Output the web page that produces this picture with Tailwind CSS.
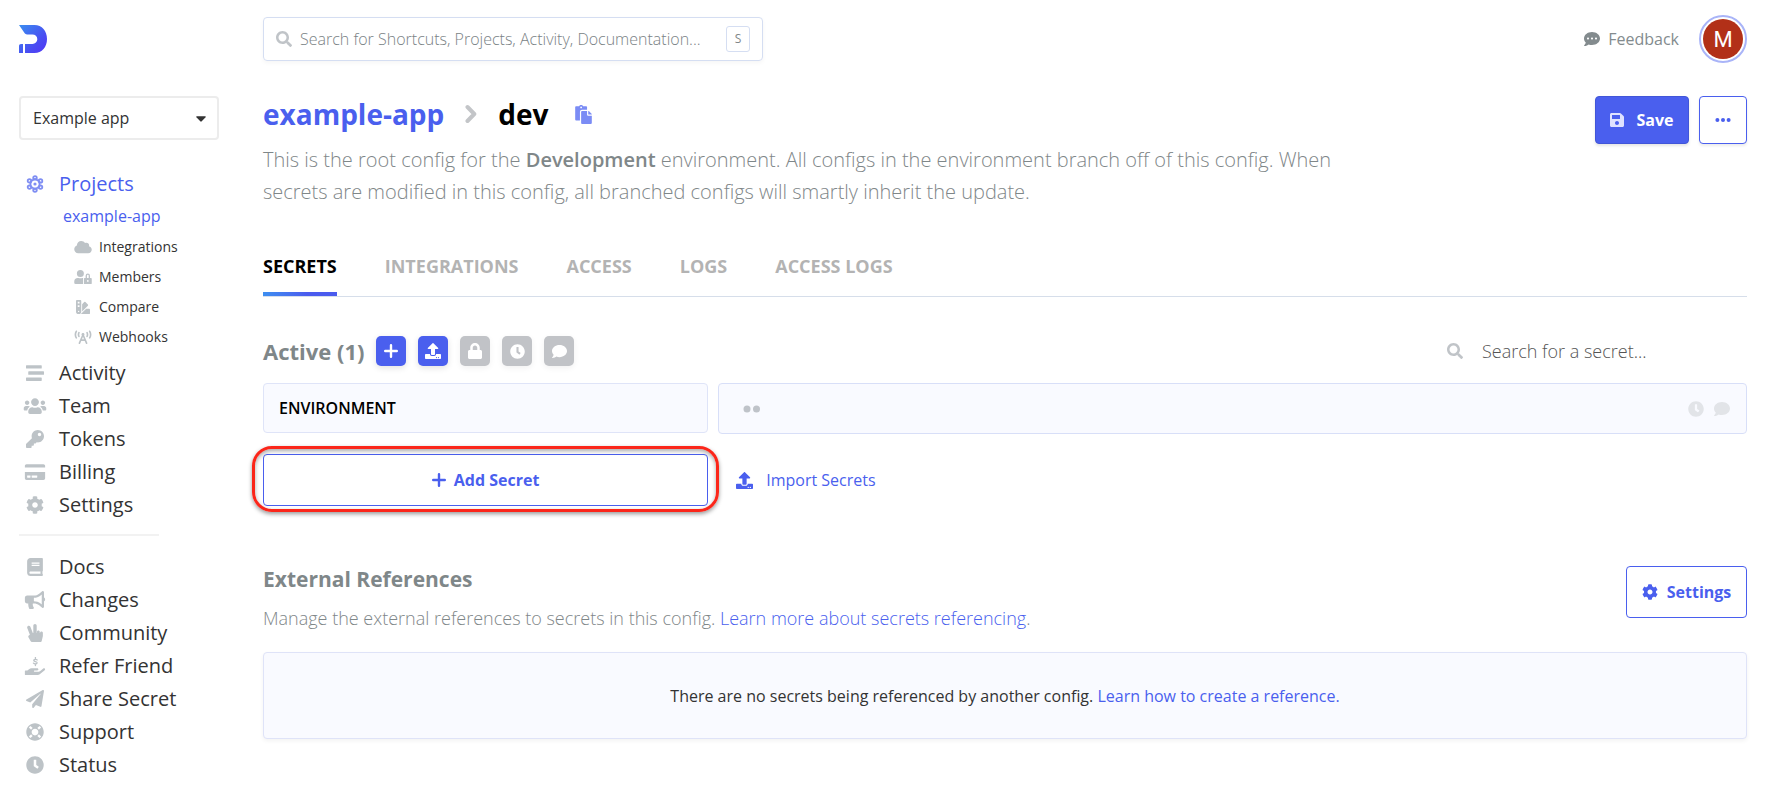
<!DOCTYPE html>
<html lang="en">
<head>
<meta charset="utf-8">
<meta name="viewport" content="width=device-width, initial-scale=1">
<title>example-app / dev</title>
<script src="https://cdn.jsdelivr.net/npm/@tailwindcss/browser@4"></script>
</head>
<body class="bg-white font-['Open_Sans','Noto_Sans',sans-serif] text-base text-[#333] antialiased">
<svg class="hidden" aria-hidden="true">
  <symbol id="search" viewBox="0 0 512 512"><path d="M505 442.7L405.3 343c-4.5-4.5-10.6-7-17-7H372c27.6-35.3 44-79.7 44-128C416 93.1 322.9 0 208 0S0 93.1 0 208s93.1 208 208 208c48.3 0 92.7-16.4 128-44v16.3c0 6.4 2.5 12.5 7 17l99.7 99.7c9.4 9.4 24.6 9.4 33.9 0l28.3-28.3c9.4-9.4 9.4-24.6.1-34zM208 336c-70.7 0-128-57.2-128-128 0-70.7 57.2-128 128-128 70.7 0 128 57.2 128 128 0 70.7-57.2 128-128 128z"/></symbol>
  <symbol id="comment-dots" viewBox="0 0 512 512"><path d="M256 32C114.6 32 0 125.1 0 240c0 49.6 21.4 95 57 130.7C44.500 421.1 2.7 466 2.2 466.500c-2.2 2.3-2.800 5.7-1.500 8.7S4.800 480 8 480c66.300 0 116-31.800 140.600-51.400 32.700 12.300 69 19.400 107.400 19.400 141.400 0 256-93.100 256-208S397.400 32 256 32zM128 272c-17.700 0-32-14.300-32-32s14.300-32 32-32 32 14.300 32 32-14.300 32-32 32zm128 0c-17.700 0-32-14.300-32-32s14.300-32 32-32 32 14.300 32 32-14.300 32-32 32zm128 0c-17.700 0-32-14.300-32-32s14.300-32 32-32 32 14.300 32 32-14.300 32-32 32z"/></symbol>
  <symbol id="comment" viewBox="0 0 512 512"><path d="M256 32C114.600 32 0 125.100 0 240c0 49.600 21.400 95 57 130.700C44.500 421.100 2.700 466 2.200 466.500c-2.200 2.300-2.800 5.700-1.500 8.700S4.800 480 8 480c66.300 0 116-31.800 140.600-51.400 32.700 12.300 69 19.400 107.400 19.400 141.400 0 256-93.100 256-208S397.400 32 256 32z"/></symbol>
  <symbol id="cog" viewBox="0 0 512 512"><path d="M487.400 315.700l-42.600-24.600c4.300-23.200 4.300-47 0-70.200l42.600-24.600c4.900-2.800 7.100-8.600 5.500-14-11.100-35.600-30-67.800-54.700-94.600-3.800-4.100-10-5.100-14.800-2.300L380.800 110c-17.900-15.400-38.500-27.300-60.800-35.100V25.800c0-5.600-3.900-10.500-9.400-11.700-36.700-8.200-74.300-7.800-109.200 0-5.500 1.200-9.400 6.100-9.400 11.700V75c-22.200 7.900-42.800 19.800-60.800 35.100L88.700 85.500c-4.900-2.800-11-1.900-14.800 2.300-24.700 26.700-43.600 58.900-54.700 94.600-1.700 5.400.6 11.200 5.500 14L67.300 221c-4.300 23.200-4.300 47 0 70.200l-42.600 24.600c-4.900 2.800-7.100 8.600-5.500 14 11.100 35.600 30 67.800 54.700 94.600 3.800 4.100 10 5.100 14.800 2.300l42.600-24.600c17.900 15.400 38.500 27.300 60.800 35.100v49.200c0 5.600 3.900 10.500 9.400 11.700 36.700 8.200 74.300 7.800 109.200 0 5.500-1.200 9.400-6.100 9.400-11.700v-49.200c22.200-7.900 42.800-19.800 60.800-35.100l42.600 24.600c4.900 2.800 11 1.900 14.800-2.300 24.700-26.700 43.600-58.900 54.700-94.600 1.500-5.500-.7-11.300-5.600-14.100zM256 336c-44.100 0-80-35.900-80-80s35.900-80 80-80 80 35.900 80 80-35.900 80-80 80z"/></symbol>
  <symbol id="clock" viewBox="0 0 512 512"><path d="M256 8C119 8 8 119 8 256s111 248 248 248 248-111 248-248S393 8 256 8zm57.100 350.100L224.900 294c-3.100-2.300-4.900-5.900-4.900-9.700V116c0-6.600 5.400-12 12-12h48c6.600 0 12 5.400 12 12v137.700l63.500 46.200c5.400 3.900 6.500 11.400 2.600 16.800l-28.200 38.800c-3.900 5.300-11.400 6.500-16.800 2.600z"/></symbol>
  <symbol id="upload" viewBox="0 0 512 512"><path d="M296 384h-80c-13.300 0-24-10.700-24-24V192h-87.700c-17.800 0-26.700-21.500-14.100-34.100L242.300 5.700c7.500-7.500 19.800-7.500 27.300 0l152.200 152.200c12.600 12.600 3.700 34.100-14.100 34.100H320v168c0 13.300-10.700 24-24 24zm216-8v112c0 13.300-10.700 24-24 24H24c-13.300 0-24-10.700-24-24V376c0-13.300 10.700-24 24-24h136v8c0 30.900 25.100 56 56 56h80c30.900 0 56-25.100 56-56v-8h136c13.300 0 24 10.700 24 24zm-124 88c0-11-9-20-20-20s-20 9-20 20 9 20 20 20 20-9 20-20zm64 0c0-11-9-20-20-20s-20 9-20 20 9 20 20 20 20-9 20-20z"/></symbol>
  <symbol id="lock" viewBox="0 0 448 512"><path d="M400 224h-24v-72C376 68.200 307.800 0 224 0S72 68.200 72 152v72H48c-26.500 0-48 21.500-48 48v192c0 26.500 21.500 48 48 48h352c26.500 0 48-21.500 48-48V272c0-26.500-21.500-48-48-48zm-104 0H152v-72c0-39.700 32.300-72 72-72s72 32.300 72 72v72z"/></symbol>
  <symbol id="plus" viewBox="0 0 14 14"><path d="M7 1.200v11.600M1.200 7h11.600" fill="none" stroke="currentColor" stroke-width="2.400" stroke-linecap="round"/></symbol>
  <symbol id="key" viewBox="0 0 512 512"><path d="M512 176.001C512 273.203 433.202 352 336 352c-11.220 0-22.190-1.062-32.827-3.069l-24.012 27.014A23.999 23.999 0 0 1 261.223 384H224v40c0 13.255-10.745 24-24 24h-40v40c0 13.255-10.745 24-24 24H24c-13.255 0-24-10.745-24-24v-78.059c0-6.365 2.529-12.470 7.029-16.971l161.802-161.802C163.108 213.814 160 195.271 160 176 160 78.798 238.797.001 335.999 0 433.488-.001 512 78.511 512 176.001zM336 128c0 26.510 21.490 48 48 48s48-21.490 48-48-21.490-48-48-48-48 21.490-48 48z"/></symbol>
  <symbol id="card" viewBox="0 0 576 512"><path d="M0 432c0 26.500 21.500 48 48 48h480c26.500 0 48-21.500 48-48V256H0v176zm192-68c0-6.600 5.400-12 12-12h136c6.600 0 12 5.400 12 12v40c0 6.600-5.400 12-12 12H204c-6.600 0-12-5.400-12-12v-40zm-128 0c0-6.600 5.400-12 12-12h72c6.600 0 12 5.400 12 12v40c0 6.600-5.400 12-12 12H76c-6.600 0-12-5.400-12-12v-40zM576 80v48H0V80c0-26.500 21.500-48 48-48h480c26.500 0 48 21.500 48 48z"/></symbol>
  <symbol id="plane" viewBox="0 0 512 512"><path d="M476 3.200L12.500 270.600c-18.100 10.400-15.800 35.600 2.200 43.200L121 358.400l287.300-253.200c5.500-4.900 13.300 2.600 8.600 8.300L176 407v80.500c0 23.600 28.500 32.900 42.500 15.800L282 426l124.600 52.200c14.200 6 30.400-2.900 33-18.200l72-432C515 7.800 493.300-6.800 476 3.200z"/></symbol>
  <symbol id="book" viewBox="0 0 448 512"><path d="M448 360V24c0-13.300-10.700-24-24-24H96C43 0 0 43 0 96v320c0 53 43 96 96 96h328c13.300 0 24-10.700 24-24v-16c0-7.500-3.500-14.300-8.900-18.700-4.200-15.400-4.200-59.300 0-74.700 5.400-4.300 8.900-11.100 8.900-18.600zM128 134c0-3.300 2.700-6 6-6h212c3.300 0 6 2.700 6 6v20c0 3.300-2.700 6-6 6H134c-3.300 0-6-2.700-6-6v-20zm0 64c0-3.300 2.700-6 6-6h212c3.300 0 6 2.700 6 6v20c0 3.300-2.700 6-6 6H134c-3.300 0-6-2.700-6-6v-20zm253.400 250H96c-17.700 0-32-14.300-32-32 0-17.600 14.400-32 32-32h285.400c-1.900 17.100-1.900 46.900 0 64z"/></symbol>
  <symbol id="bullhorn" viewBox="0 0 576 512"><path d="M576 240c0-23.630-12.950-44.040-32-55.120V32.010C544 23.260 537.020 0 512 0c-7.120 0-14.190 2.380-19.980 7.020l-85.030 68.030C364.280 109.190 310.660 128 256 128H64c-35.350 0-64 28.650-64 64v96c0 35.350 28.650 64 64 64h33.700c-1.390 10.480-2.180 21.140-2.180 32 0 39.770 9.260 77.350 25.560 110.940 5.190 10.690 16.520 17.060 28.400 17.060h74.280c26.050 0 41.690-29.840 25.900-50.560-16.400-21.520-26.150-48.360-26.150-77.440 0-11.110 1.620-21.790 4.410-32H256c54.660 0 108.280 18.810 150.980 52.950l85.030 68.030a32.023 32.023 0 0 0 19.980 7.020c24.920 0 32-22.780 32-32V295.130C563.050 284.040 576 263.630 576 240zm-96 141.420l-33.050-26.440C392.950 311.780 325.120 288 256 288v-96c69.120 0 136.950-23.780 190.950-66.980L480 98.580v282.840z"/></symbol>
  <symbol id="peace" viewBox="0 0 448 512"><path d="M408 216c-22.092 0-40 17.909-40 40h-8v-32c0-22.091-17.908-40-40-40s-40 17.909-40 40v32h-8V48c0-26.510-21.490-48-48-48s-48 21.490-48 48v208h-13.572L92.688 78.449C82.994 53.774 55.134 41.630 30.461 51.324 5.787 61.017-6.356 88.877 3.337 113.551l74.765 190.342-31.090 24.872c-15.381 12.306-19.515 33.978-9.741 51.081l64 112A39.998 39.998 0 0 0 136 512h240c18.562 0 34.686-12.770 38.937-30.838l32-136A39.973 39.973 0 0 0 448 336v-80c0-22.091-17.908-40-40-40z"/></symbol>
  <symbol id="ring" viewBox="0 0 512 512"><path d="M256 8C119.033 8 8 119.033 8 256s111.033 248 248 248 248-111.033 248-248S392.967 8 256 8zm173.696 119.559l-63.399 63.399c-10.987-18.559-26.670-34.252-45.255-45.255l63.399-63.399a218.396 218.396 0 0 1 45.255 45.255zM256 352c-53.019 0-96-42.981-96-96s42.981-96 96-96 96 42.981 96 96-42.981 96-96 96zM127.559 82.304l63.399 63.399c-18.559 10.987-34.252 26.670-45.255 45.255l-63.399-63.399a218.372 218.372 0 0 1 45.255-45.255zM82.304 384.441l63.399-63.399c10.987 18.559 26.670 34.252 45.255 45.255l-63.399 63.399a218.396 218.396 0 0 1-45.255-45.255zm302.137 45.255l-63.399-63.399c18.559-10.987 34.252-26.670 45.255-45.255l63.399 63.399a218.403 218.403 0 0 1-45.255 45.255z"/></symbol>
  <symbol id="refer" viewBox="0 0 576 512"><path d="M565.300 328.100c-11.800-10.700-30.200-10-42.600 0L430.300 402c-11.300 9.100-25.400 14-40 14H272c-8.800 0-16-7.200-16-16s7.200-16 16-16h78.300c15.900 0 30.700-10.900 33.300-26.600 3.300-20-12.100-37.400-31.600-37.400H192c-27 0-53.100 9.300-74.100 26.300L71.400 384H16c-8.800 0-16 7.200-16 16v96c0 8.800 7.200 16 16 16h356.800c14.500 0 28.600-4.900 40-14L564 377c15.200-12.100 16.400-35.300 1.300-48.900z"/><path d="M348 84c-16-22-84-28-94 8-10 44 98 30 92 76-6 38-82 32-102 6M300 14v36m0 154v38" fill="none" stroke="currentColor" stroke-width="38" stroke-linecap="round"/></symbol>
  <symbol id="users" viewBox="0 0 640 512"><path d="M96 224c35.300 0 64-28.700 64-64s-28.700-64-64-64-64 28.700-64 64 28.700 64 64 64zm448 0c35.300 0 64-28.700 64-64s-28.700-64-64-64-64 28.700-64 64 28.700 64 64 64zm32 32h-64c-17.600 0-33.500 7.100-45.100 18.600 40.300 22.100 68.900 62 75.100 109.400h66c17.700 0 32-14.300 32-32v-32c0-35.300-28.700-64-64-64zm-256 0c61.900 0 112-50.100 112-112S381.900 32 320 32 208 82.100 208 144s50.100 112 112 112zm76.800 32h-8.300c-20.800 10-43.900 16-68.500 16s-47.600-6-68.500-16h-8.300C179.600 288 128 339.600 128 403.200V432c0 26.500 21.500 48 48 48h288c26.500 0 48-21.500 48-48v-28.800c0-63.600-51.600-115.200-115.200-115.200zm-223.700-13.400C161.500 263.100 145.600 256 128 256H64c-35.300 0-64 28.700-64 64v32c0 17.700 14.300 32 32 32h65.900c6.300-47.400 34.900-87.300 75.200-109.400z"/></symbol>
  <symbol id="cloud" viewBox="0 0 640 512"><path d="M537.600 226.600c4.100-10.700 6.400-22.400 6.400-34.600 0-53-43-96-96-96-19.700 0-38.100 6-53.300 16.200C367 64.200 315.300 32 256 32c-88.400 0-160 71.600-160 160 0 2.700.1 5.400.2 8.100C40.200 219.800 0 273.200 0 336c0 79.500 64.500 144 144 144h368c70.700 0 128-57.300 128-128 0-61.900-44-113.600-102.400-125.400z"/></symbol>
  <symbol id="user-lock" viewBox="0 0 640 512"><path d="M224 256A128 128 0 1 0 96 128a128 128 0 0 0 128 128zm96 64a63.080 63.080 0 0 1 8.100-30.500c-4.800-.5-9.500-1.500-14.500-1.500h-16.700a174.080 174.080 0 0 1-145.800 0h-16.700A134.430 134.430 0 0 0 0 422.400V464a48 48 0 0 0 48 48h280.900a63.540 63.540 0 0 1-8.900-32zm288-32h-32v-80a80 80 0 0 0-160 0v80h-32a32 32 0 0 0-32 32v160a32 32 0 0 0 32 32h224a32 32 0 0 0 32-32V320a32 32 0 0 0-32-32zM496 432a32 32 0 1 1 32-32 32 32 0 0 1-32 32zm32-144h-64v-80a32 32 0 0 1 64 0z"/></symbol>
  <symbol id="swatch" viewBox="0 0 512 512"><path d="M434.660 167.710L344.500 77.360a31.830 31.830 0 0 0-45-.07l-.07.07L224 152.880V424L434.660 212.900a32 32 0 0 0 0-45.190zM480 320H373.090L186.680 506.510c-2.060 2.070-4.500 3.580-6.680 5.490H480a32 32 0 0 0 32-32V352a32 32 0 0 0-32-32zM192 32a32 32 0 0 0-32-32H32A32 32 0 0 0 0 32v384a96 96 0 0 0 192 0zM96 440a24 24 0 1 1 24-24 24 24 0 0 1-24 24zm32-184H64v-64h64zm0-128H64V64h64z"/></symbol>
  <symbol id="tower" viewBox="0 0 640 512"><g fill="none" stroke="currentColor" stroke-width="60" stroke-linecap="round"><path d="M190 480L320 175l130 305M245 370h150"/><path d="M75 48c-46 84-46 160 0 240M565 48c46 84 46 160 0 240M172 98c-22 46-22 96 0 140M468 98c22 46 22 96 0 140"/></g><circle cx="320" cy="165" r="52"/></symbol>
  <symbol id="stream" viewBox="0 0 512 512"><path d="M16 128h416c8.840 0 16-7.160 16-16V48c0-8.840-7.160-16-16-16H16C7.160 32 0 39.160 0 48v64c0 8.840 7.160 16 16 16zm480 80H80c-8.840 0-16 7.160-16 16v64c0 8.840 7.160 16 16 16h416c8.840 0 16-7.160 16-16v-64c0-8.840-7.160-16-16-16zm-64 176H16c-8.840 0-16 7.160-16 16v64c0 8.840 7.160 16 16 16h416c8.840 0 16-7.160 16-16v-64c0-8.840-7.160-16-16-16z"/></symbol>
  <symbol id="save" viewBox="0 0 448 512"><path d="M433.941 129.941l-83.882-83.882A48 48 0 0 0 316.118 32H48C21.490 32 0 53.490 0 80v352c0 26.510 21.490 48 48 48h352c26.510 0 48-21.490 48-48V163.882a48 48 0 0 0-14.059-33.941zM224 416c-35.346 0-64-28.654-64-64 0-35.346 28.654-64 64-64s64 28.654 64 64c0 35.346-28.654 64-64 64zm96-304.520V212c0 6.627-5.373 12-12 12H76c-6.627 0-12-5.373-12-12V108c0-6.627 5.373-12 12-12h228.520c3.183 0 6.235 1.264 8.485 3.515l3.480 3.480A11.996 11.996 0 0 1 320 111.480z"/></symbol>
  <symbol id="paste" viewBox="0 0 448 512"><path d="M128 184c0-30.879 25.122-56 56-56h136V56c0-13.255-10.745-24-24-24h-80.610C204.306 12.890 183.637 0 160 0s-44.306 12.890-55.390 32H24C10.745 32 0 42.745 0 56v336c0 13.255 10.745 24 24 24h104V184zm32-144c13.255 0 24 10.745 24 24s-10.745 24-24 24-24-10.745-24-24 10.745-24 24-24zm184 248h104v200c0 13.255-10.745 24-24 24H184c-13.255 0-24-10.745-24-24V184c0-13.255 10.745-24 24-24h136v104c0 13.200 10.800 24 24 24zm104-38.059V256h-96v-96h6.059a24 24 0 0 1 16.970 7.029l65.941 65.941a24.002 24.002 0 0 1 7.030 16.971z"/></symbol>
  <symbol id="atom" viewBox="0 0 18 18"><g fill="none" stroke="currentColor" stroke-width="1.800"><path d="M9 3.800l4.500 2.600v5.200L9 14.200l-4.500-2.600V6.400z"/><circle cx="9" cy="2.900" r="1.800"/><circle cx="14.500" cy="5.900" r="1.800"/><circle cx="14.500" cy="12.100" r="1.800"/><circle cx="9" cy="15.100" r="1.800"/><circle cx="3.500" cy="12.100" r="1.800"/><circle cx="3.500" cy="5.900" r="1.800"/></g><circle cx="9" cy="9" r="1.600" fill="currentColor"/></symbol>
</svg>

<div class="flex min-h-screen">
  <aside class="w-[263px] shrink-0 pl-[19px]">
    <a href="#" aria-label="Home" class="flex h-[78px] items-center">
      <svg class="size-7" viewBox="0 0 28 28"><defs><linearGradient id="brand" x1="0" y1="0" x2="1" y2="1"><stop offset="0" stop-color="#3a8ef0"/><stop offset=".65" stop-color="#4a4cf2"/><stop offset="1" stop-color="#5236f5"/></linearGradient></defs><path fill="url(#brand)" d="M0 0h15.500C23 0 28 6 28 14s-5 14-12.500 14H6v-9h7.500a4.800 4.800 0 0 0 0-9.600H8c-1 0-1.700-.3-2.300-1.100zM2 19h2v9H0v-7c0-1.200.8-2 2-2z"/></svg>
    </a>
    <div class="relative mt-[18px] w-[200px]">
      <select aria-label="Workplace" class="h-11 w-full appearance-none rounded-[4px] border-2 border-[#ececec] bg-white pr-8 pl-3 text-base">
        <option>Example app</option>
      </select>
      <svg class="pointer-events-none absolute top-5 right-[13px] h-[6px] w-[10px]" viewBox="0 0 11 6"><path fill="#333" d="M1 0h9c.8 0 1.100.7.6 1.200L6.300 5.600c-.5.5-1.100.5-1.600 0L.4 1.200C-.1.700.2 0 1 0z"/></svg>
    </div>

    <nav class="mt-[27px] text-xl" aria-label="Main">
      <a href="#" class="flex h-[33px] items-center gap-2 text-[#4a5fee]"><svg class="h-[18px] w-8 opacity-70"><use href="#atom"/></svg>Projects</a>
      <a href="#" class="ml-[44px] flex h-8 items-center text-base text-[#4a5fee]">example-app</a>
      <div class="ml-[55px] text-sm">
        <a href="#" class="flex h-[30px] items-center gap-[7px]"><svg class="h-[14px] w-[18px] fill-[#bdc3c7] text-[#bdc3c7]"><use href="#cloud"/></svg>Integrations</a>
        <a href="#" class="flex h-[30px] items-center gap-[7px]"><svg class="h-[14px] w-[18px] fill-[#bdc3c7] text-[#bdc3c7]"><use href="#user-lock"/></svg>Members</a>
        <a href="#" class="flex h-[30px] items-center gap-[7px]"><svg class="h-[14px] w-[18px] fill-[#bdc3c7] text-[#bdc3c7]"><use href="#swatch"/></svg>Compare</a>
        <a href="#" class="flex h-[30px] items-center gap-[7px]"><svg class="h-[14px] w-[18px] fill-[#bdc3c7] text-[#bdc3c7]"><use href="#tower"/></svg>Webhooks</a>
      </div>
      <div class="mt-1">
        <a href="#" class="flex h-[33px] items-center gap-2"><svg class="h-[18px] w-8 fill-[#bdc3c7] text-[#bdc3c7]"><use href="#stream"/></svg>Activity</a>
        <a href="#" class="flex h-[33px] items-center gap-2"><svg class="h-[18px] w-8 fill-[#bdc3c7] text-[#bdc3c7]"><use href="#users"/></svg>Team</a>
        <a href="#" class="flex h-[33px] items-center gap-2"><svg class="h-[18px] w-8 fill-[#bdc3c7] text-[#bdc3c7]"><use href="#key"/></svg>Tokens</a>
        <a href="#" class="flex h-[33px] items-center gap-2"><svg class="h-[18px] w-8 fill-[#bdc3c7] text-[#bdc3c7]"><use href="#card"/></svg>Billing</a>
        <a href="#" class="flex h-[33px] items-center gap-2"><svg class="h-[18px] w-8 fill-[#bdc3c7] text-[#bdc3c7]"><use href="#cog"/></svg>Settings</a>
      </div>
      <hr class="mt-[13px] mb-[14px] w-[140px] border-t-2 border-[#f2f2f2]">
      <div>
        <a href="#" class="flex h-[33px] items-center gap-2"><svg class="h-[18px] w-8 fill-[#bdc3c7] text-[#bdc3c7]"><use href="#book"/></svg>Docs</a>
        <a href="#" class="flex h-[33px] items-center gap-2"><svg class="h-[18px] w-8 fill-[#bdc3c7] text-[#bdc3c7]"><use href="#bullhorn"/></svg>Changes</a>
        <a href="#" class="flex h-[33px] items-center gap-2"><svg class="h-[18px] w-8 fill-[#bdc3c7] text-[#bdc3c7]"><use href="#peace"/></svg>Community</a>
        <a href="#" class="flex h-[33px] items-center gap-2"><svg class="h-[18px] w-8 fill-[#bdc3c7] text-[#bdc3c7]"><use href="#refer"/></svg>Refer Friend</a>
        <a href="#" class="flex h-[33px] items-center gap-2"><svg class="h-[18px] w-8 fill-[#bdc3c7] text-[#bdc3c7]"><use href="#plane"/></svg>Share Secret</a>
        <a href="#" class="flex h-[33px] items-center gap-2"><svg class="h-[18px] w-8 fill-[#bdc3c7] text-[#bdc3c7]"><use href="#ring"/></svg>Support</a>
        <a href="#" class="flex h-[33px] items-center gap-2"><svg class="h-[18px] w-8 fill-[#bdc3c7] text-[#bdc3c7]"><use href="#clock"/></svg>Status</a>
      </div>
    </nav>
  </aside>

  <div class="min-w-0 flex-1 pr-[37px]">
    <header class="flex h-[78px] items-center justify-between">
      <label class="flex h-11 w-[500px] items-center gap-2 rounded-[4px] border border-[#d5def2] px-3 shadow-[0_2px_4px_rgba(0,0,0,0.04)]">
        <svg class="size-4 shrink-0 fill-[#c0c4c8]"><use href="#search"/></svg>
        <input type="text" aria-label="Search" placeholder="Search for Shortcuts, Projects, Activity, Documentation..." class="min-w-0 flex-1 bg-transparent text-base font-light outline-none placeholder:text-[#7a8285]">
        <kbd class="flex h-[26px] w-6 items-center justify-center rounded-[3px] border border-[#d5def2] font-['Open_Sans',sans-serif] text-xs text-[#7f8789]">S</kbd>
      </label>
      <div class="flex items-center gap-5">
        <a href="#" class="flex items-center gap-2 text-[#838b8e]"><svg class="size-4 fill-[#838b8e]"><use href="#comment-dots"/></svg>Feedback</a>
        <button aria-label="Account" class="flex size-12 items-center justify-center rounded-full border-2 border-[#a9b4f8] bg-white"><span class="flex size-10 items-center justify-center rounded-full bg-[#b23018] font-['Roboto',sans-serif] text-[22px] text-white">M</span></button>
      </div>
    </header>

    <main class="pt-[18px]">
      <div class="flex items-start justify-between gap-6">
        <div>
          <h1 class="flex h-9 items-center text-[28px] font-bold text-black">
            <a href="#" class="text-[#4a5fee]">example-app</a>
            <svg class="mx-[21px] h-5 w-3" viewBox="0 0 12 20"><path d="M2.500 3l6.800 7-6.800 7" fill="none" stroke="#c3c5c8" stroke-width="4" stroke-linecap="round" stroke-linejoin="round"/></svg>
            dev
            <button aria-label="Copy" class="ml-[26px]"><svg class="h-[19px] w-[17px] fill-[#7b8cf5]"><use href="#paste"/></svg></button>
          </h1>
          <p class="mt-3 max-w-[1090px] text-xl leading-8 font-light text-[#7f8789]">This is the root config for the <b class="font-semibold">Development</b> environment. All configs in the environment branch off of this config. When secrets are modified in this config, all branched configs will smartly inherit the update.</p>
        </div>
        <div class="flex gap-[10px]">
          <button class="flex h-12 w-[94px] items-center justify-center gap-3 rounded-[4px] border border-[#4156d8] bg-[#4a5fee] font-bold text-white shadow-[0_2px_3px_rgba(0,0,0,0.1)]"><svg class="h-4 w-[14px] shrink-0 fill-[#dfe2ff]"><use href="#save"/></svg>Save</button>
          <button aria-label="More" class="flex size-12 items-center justify-center rounded-[4px] border border-[#4a5fee] bg-white shadow-[0_2px_3px_rgba(0,0,0,0.08)]"><svg class="h-1 w-4 fill-[#4a5fee]" viewBox="0 0 16 4"><circle cx="2.400" cy="2" r="2"/><circle cx="8" cy="2" r="2"/><circle cx="13.600" cy="2" r="2"/></svg></button>
        </div>
      </div>

      <nav aria-label="Config" class="mt-[31px] flex gap-12 border-b border-[#d6deea] text-lg font-bold text-[#b3b3b3]">
        <a href="#" aria-current="page" class="flex h-[57px] flex-col text-black"><span class="flex flex-1 items-center">SECRETS</span><span class="h-1 bg-linear-to-r from-[#3d8ef0] to-[#4a5bee] to-60%"></span></a>
        <a href="#" class="flex h-[53px] items-center">INTEGRATIONS</a>
        <a href="#" class="flex h-[53px] items-center">ACCESS</a>
        <a href="#" class="flex h-[53px] items-center">LOGS</a>
        <a href="#" class="flex h-[53px] items-center">ACCESS LOGS</a>
      </nav>

      <section>
        <div class="mt-[39px] flex h-[30px] items-center justify-between">
          <div class="flex items-center gap-3">
            <h2 class="text-[22px] font-bold text-[#7f8789]">Active (1)</h2>
            <button aria-label="Add" class="flex size-[30px] items-center justify-center rounded-[5px] bg-[#4a5fee] text-white shadow-[0_2px_6px_rgba(0,0,0,0.12)]"><svg class="size-[14px]"><use href="#plus"/></svg></button>
            <button aria-label="Upload" class="flex size-[30px] items-center justify-center rounded-[5px] bg-[#4a5fee] text-white shadow-[0_2px_6px_rgba(0,0,0,0.12)]"><svg class="size-4 fill-white"><use href="#upload"/></svg></button>
            <button aria-label="Lock" class="flex size-[30px] items-center justify-center rounded-[5px] bg-[#c1c3c7] shadow-[0_2px_6px_rgba(0,0,0,0.06)]"><svg class="h-4 w-[14px] fill-white"><use href="#lock"/></svg></button>
            <button aria-label="History" class="flex size-[30px] items-center justify-center rounded-[5px] bg-[#c1c3c7] shadow-[0_2px_6px_rgba(0,0,0,0.06)]"><svg class="size-[15px] fill-white"><use href="#clock"/></svg></button>
            <button aria-label="Notes" class="flex size-[30px] items-center justify-center rounded-[5px] bg-[#c1c3c7] shadow-[0_2px_6px_rgba(0,0,0,0.06)]"><svg class="size-[15px] fill-white"><use href="#comment"/></svg></button>
          </div>
          <label class="flex w-[300px] items-center gap-[19px]">
            <svg class="size-4 shrink-0 fill-[#c0c4c8]"><use href="#search"/></svg>
            <input type="text" aria-label="Search for a secret" placeholder="Search for a secret..." class="h-[30px] min-w-0 flex-1 bg-transparent text-lg font-light outline-none placeholder:text-[#555]">
          </label>
        </div>

        <div class="mt-[17px] grid grid-cols-[30%_1fr] items-start gap-x-[10px]">
          <input type="text" aria-label="Secret name" value="ENVIRONMENT" class="h-[50px] rounded-[4px] border border-[#dfe4f8] bg-[#f9faff] px-[15px] font-semibold text-black outline-none">
          <div class="flex h-[51px] items-center rounded-[4px] border border-[#d8dff8] bg-[#f9faff] pr-4 pl-6">
            <svg class="h-2 w-[18px] fill-[#bfc3c9]" viewBox="0 0 18 8" role="img" aria-label="Hidden value"><circle cx="4" cy="4" r="3.500"/><circle cx="13.500" cy="4" r="3.500"/></svg>
            <button aria-label="History" class="ml-auto"><svg class="size-4 fill-[#e2e4e8]"><use href="#clock"/></svg></button>
            <button aria-label="Note" class="ml-[10px]"><svg class="size-4 fill-[#e2e4e8]"><use href="#comment"/></svg></button>
          </div>
        </div>

        <div class="mt-5 grid grid-cols-[30%_1fr] items-center gap-x-7">
          <div class="relative">
            <button class="flex h-[52px] w-full items-center justify-center gap-2 rounded-[4px] border border-[#4a5fee] bg-white font-bold text-[#4a5fee]"><svg class="size-[14px]"><use href="#plus"/></svg>Add Secret</button>
            <div class="pointer-events-none absolute -inset-x-[11px] -top-2 -bottom-[6px] rounded-[20px] border-[3px] border-[#fb261a] shadow-[0_2px_4px_rgba(0,0,0,0.4),inset_0_2px_4px_rgba(0,0,0,0.35)]"></div>
          </div>
          <button class="flex items-center gap-[13px] justify-self-start text-[#4a5fee]"><svg class="size-[17px] fill-[#4a5fee]"><use href="#upload"/></svg>Import Secrets</button>
        </div>
      </section>

      <section class="mt-[60px]">
        <div class="flex items-start justify-between gap-6">
          <div>
            <h2 class="text-[21px] leading-[26px] font-bold text-[#7f8789]">External References</h2>
            <p class="mt-[13px] text-lg leading-[26px] font-light text-[#7f8789]">Manage the external references to secrets in this config. <a href="#" class="text-[#4a5fee]">Learn more about secrets referencing</a>.</p>
          </div>
          <button class="flex h-[52px] w-[121px] items-center justify-center gap-[9px] rounded-[4px] border border-[#4a5fee] bg-white text-base font-bold text-[#4a5fee]"><svg class="size-4 shrink-0 fill-[#4a5fee]"><use href="#cog"/></svg>Settings</button>
        </div>
        <div class="mt-[21px] flex h-[87px] items-center justify-center rounded-[4px] border border-[#dfe3f8] bg-[#f9faff] font-medium shadow-[0_2px_4px_rgba(0,0,0,0.05)]">
          <p>There are no secrets being referenced by another config. <a href="#" class="text-[#4a5fee]">Learn how to create a reference.</a></p>
        </div>
      </section>
    </main>
  </div>
</div>
</body>
</html>
